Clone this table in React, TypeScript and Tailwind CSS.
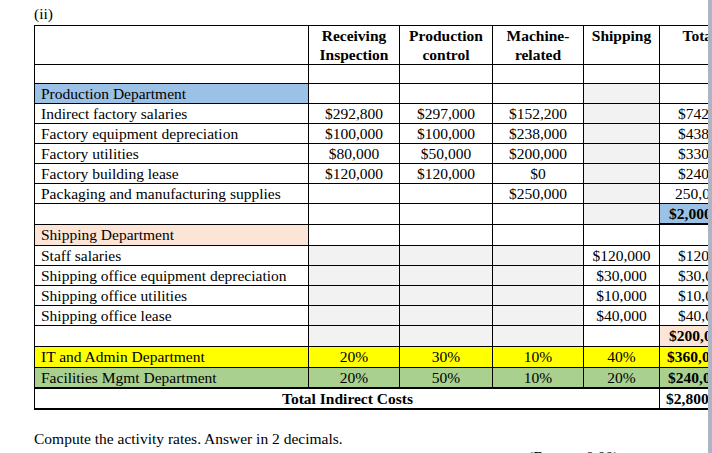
import clsx from "clsx";
import type { ReactNode } from "react";

interface CellProps {
  className?: string;
  children?: ReactNode;
}

// one spreadsheet cell: right + bottom hairline, table supplies top/left
function Cell({ className, children }: CellProps) {
  return (
    <div
      className={clsx(
        "border-r border-b border-black flex items-center whitespace-nowrap",
        className
      )}
    >
      {children}
    </div>
  );
}

interface Row {
  label: string;
  labelBg?: string;
  values: string[];
  grey: boolean[];
  rowBg?: string;
  total?: string;
  totalBold?: boolean;
  totalBg?: string;
  totalPad?: string;
  thick?: boolean;
}

const GREY = "bg-[#f2f2f2]";

const rows: Row[] = [
  { label: "", values: ["", "", "", ""], grey: [false, false, false, false] },
  {
    label: "Production Department",
    labelBg: "bg-[#9bc2e6]",
    values: ["", "", "", ""],
    grey: [false, false, false, true]
  },
  {
    label: "Indirect factory salaries",
    values: ["$292,800", "$297,000", "$152,200", ""],
    grey: [false, false, false, true],
    total: "$742,000"
  },
  {
    label: "Factory equipment depreciation",
    values: ["$100,000", "$100,000", "$238,000", ""],
    grey: [false, false, false, true],
    total: "$438,000"
  },
  {
    label: "Factory utilities",
    values: ["$80,000", "$50,000", "$200,000", ""],
    grey: [false, false, false, true],
    total: "$330,000"
  },
  {
    label: "Factory building lease",
    values: ["$120,000", "$120,000", "$0", ""],
    grey: [false, false, false, true],
    total: "$240,000"
  },
  {
    label: "Packaging and manufacturing supplies",
    values: ["", "", "$250,000", ""],
    grey: [false, false, false, true],
    total: "250,000",
    totalPad: "pl-[15px]"
  },
  {
    label: "",
    values: ["", "", "", ""],
    grey: [false, false, false, true],
    total: "$2,000,000",
    totalBold: true,
    totalBg: "bg-[#9bc2e6] border-b-2"
  },
  {
    label: "Shipping Department",
    labelBg: "bg-[#fce4d6]",
    values: ["", "", "", ""],
    grey: [false, false, false, false]
  },
  {
    label: "Staff salaries",
    values: ["", "", "", "$120,000"],
    grey: [true, true, true, false],
    total: "$120,000"
  },
  {
    label: "Shipping office equipment depreciation",
    values: ["", "", "", "$30,000"],
    grey: [true, true, true, false],
    total: "$30,000"
  },
  {
    label: "Shipping office utilities",
    values: ["", "", "", "$10,000"],
    grey: [true, true, true, false],
    total: "$10,000"
  },
  {
    label: "Shipping office lease",
    values: ["", "", "", "$40,000"],
    grey: [true, true, true, false],
    total: "$40,000"
  },
  {
    label: "",
    values: ["", "", "", ""],
    grey: [true, true, true, false],
    total: "$200,000",
    totalBold: true,
    totalBg: "bg-[#fce4d6]"
  },
  {
    label: "IT and Admin Department",
    rowBg: "bg-[#ffff00]",
    values: ["20%", "30%", "10%", "40%"],
    grey: [false, false, false, false],
    total: "$360,000",
    totalBold: true,
    totalPad: "pl-[7px]"
  },
  {
    label: "Facilities Mgmt Department",
    rowBg: "bg-[#a9d08e]",
    values: ["20%", "50%", "10%", "20%"],
    grey: [false, false, false, false],
    total: "$240,000",
    totalBold: true,
    totalPad: "pl-[8px]",
    thick: true
  }
];

export default function App() {
  return (
    <div className="relative w-[712px] h-[453px] overflow-hidden bg-white text-black font-['Liberation_Serif',serif] text-[15.5px]">
      <div className="pl-[34px]">
        <div className="h-[25px] pt-[5px] leading-[18px]">(ii)</div>

        <div className="grid w-[706px] border-t border-l border-black grid-cols-[274px_91px_93px_91px_76px_80px] grid-rows-[39px_19px_20px_20px_20px_20px_20px_20px_21px_21px_20px_20px_20px_20px_21px_21px_21px_21px]">
          {/* header */}
          <Cell />
          {[
            ["Receiving", "Inspection"],
            ["Production", "control"],
            ["Machine-", "related"],
            ["Shipping", ""],
            ["Total", ""]
          ].map(([a, b], i) => (
            <Cell
              key={i}
              className="!items-start justify-center text-center font-bold leading-[19px]"
            >
              <span>
                {a}
                {b && <br />}
                {b}
              </span>
            </Cell>
          ))}

          {rows.map((row, r) => (
            <div key={r} className="contents">
              <Cell
                className={clsx(
                  "pl-[6px]",
                  row.rowBg ?? row.labelBg,
                  row.thick && "border-b-2"
                )}
              >
                {row.label}
              </Cell>
              {row.values.map((v, i) => (
                <Cell
                  key={i}
                  className={clsx(
                    "justify-center",
                    row.rowBg ?? (row.grey[i] && GREY),
                    row.thick && "border-b-2"
                  )}
                >
                  {v}
                </Cell>
              ))}
              <Cell
                className={clsx(
                  row.totalPad ?? (row.totalBold ? "pl-[9px]" : "pl-[18px]"),
                  row.totalBold && "font-bold",
                  row.rowBg ?? row.totalBg,
                  row.thick && "border-b-2"
                )}
              >
                {row.total}
              </Cell>
            </div>
          ))}

          <Cell className="col-span-5 justify-center font-bold border-b-2 pl-[1px]">
            Total Indirect Costs
          </Cell>
          <Cell className="pl-[6px] font-bold border-b-2">$2,800,000</Cell>
        </div>

        <div className="mt-[20px] leading-[17px]">
          Compute the activity rates. Answer in 2 decimals.
        </div>
        <div className="ml-[494px] leading-[15px] pt-[2px]">(Format: 0.00)</div>
      </div>

      {/* window edge on the right */}
      <div className="absolute top-0 right-0 h-full w-[4px] bg-[#aab5c6]" />
    </div>
  );
}
